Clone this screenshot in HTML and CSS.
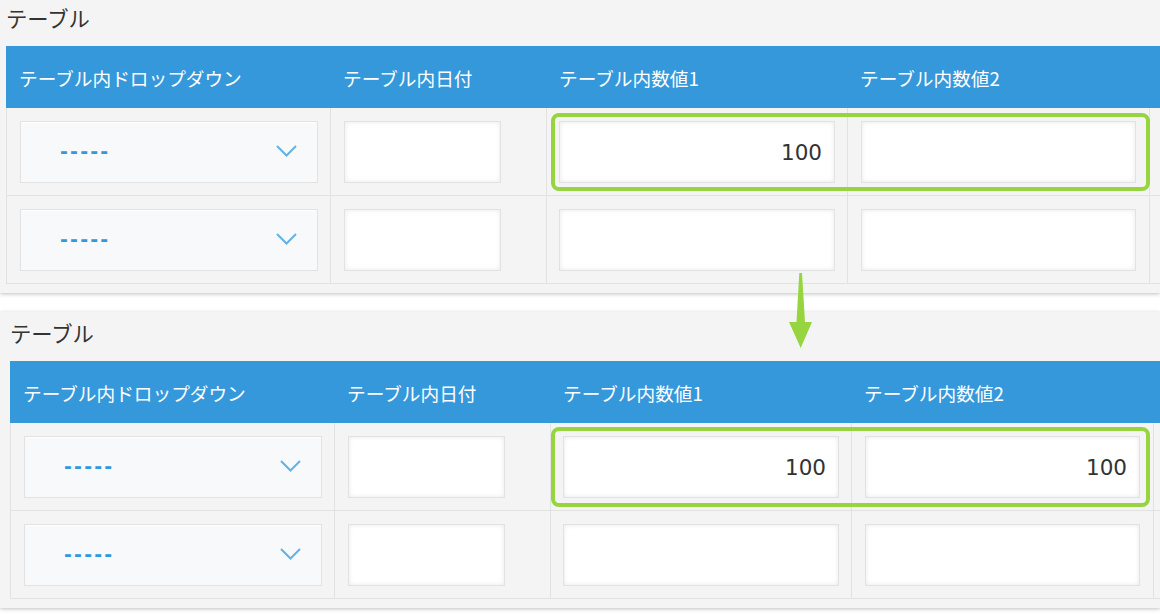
FILE: index.html
```html
<!DOCTYPE html>
<html lang="ja">
<head>
<meta charset="utf-8">
<title>テーブル</title>
<link rel="stylesheet" href="styles.css">
</head>
<body>
<div class="page">

  <section class="panel panel-first">
    <h2 class="panel-title">テーブル</h2>
    <table class="subtable">
      <thead>
        <tr>
          <th class="c1">テーブル内ドロップダウン</th>
          <th class="c2">テーブル内日付</th>
          <th class="c3">テーブル内数値1</th>
          <th class="c4">テーブル内数値2</th>
          <th class="c5"></th>
        </tr>
      </thead>
      <tbody>
        <tr>
          <td class="c1"><div class="dropdown"><span class="dd-value">-----</span><svg class="chev" width="21" height="12" viewBox="0 0 21 12"><polyline points="1,1 10.5,10.5 20,1" fill="none" stroke="#62b1e7" stroke-width="2"/></svg></div></td>
          <td class="c2"><div class="field date"></div></td>
          <td class="c3"><div class="field num wide3">100</div></td>
          <td class="c4"><div class="field num wide4"></div></td>
          <td class="c5"></td>
        </tr>
        <tr>
          <td class="c1"><div class="dropdown"><span class="dd-value">-----</span><svg class="chev" width="21" height="12" viewBox="0 0 21 12"><polyline points="1,1 10.5,10.5 20,1" fill="none" stroke="#62b1e7" stroke-width="2"/></svg></div></td>
          <td class="c2"><div class="field date"></div></td>
          <td class="c3"><div class="field num wide3"></div></td>
          <td class="c4"><div class="field num wide4"></div></td>
          <td class="c5"></td>
        </tr>
      </tbody>
    </table>
    <div class="highlight hl-first"></div>
  </section>

  <section class="panel panel-second">
    <h2 class="panel-title">テーブル</h2>
    <table class="subtable">
      <thead>
        <tr>
          <th class="c1">テーブル内ドロップダウン</th>
          <th class="c2">テーブル内日付</th>
          <th class="c3">テーブル内数値1</th>
          <th class="c4">テーブル内数値2</th>
          <th class="c5"></th>
        </tr>
      </thead>
      <tbody>
        <tr>
          <td class="c1"><div class="dropdown"><span class="dd-value">-----</span><svg class="chev" width="21" height="12" viewBox="0 0 21 12"><polyline points="1,1 10.5,10.5 20,1" fill="none" stroke="#62b1e7" stroke-width="2"/></svg></div></td>
          <td class="c2"><div class="field date"></div></td>
          <td class="c3"><div class="field num wide3">100</div></td>
          <td class="c4"><div class="field num wide4">100</div></td>
          <td class="c5"></td>
        </tr>
        <tr>
          <td class="c1"><div class="dropdown"><span class="dd-value">-----</span><svg class="chev" width="21" height="12" viewBox="0 0 21 12"><polyline points="1,1 10.5,10.5 20,1" fill="none" stroke="#62b1e7" stroke-width="2"/></svg></div></td>
          <td class="c2"><div class="field date"></div></td>
          <td class="c3"><div class="field num wide3"></div></td>
          <td class="c4"><div class="field num wide4"></div></td>
          <td class="c5"></td>
        </tr>
      </tbody>
    </table>
    <div class="highlight hl-second"></div>
  </section>

  <svg class="arrow" width="30" height="80" viewBox="0 0 30 80">
    <polygon points="13.3,3 16,3 19,52 26,52 14.7,78 3,52 10.5,52" fill="#96d540"/>
  </svg>
</div>
</body>
</html>
```

FILE: styles.css
```css
html, body {
  margin: 0;
  padding: 0;
  background: #ffffff;
  overflow: hidden;
}

.page {
  position: relative;
  width: 1160px;
  height: 614px;
  overflow: hidden;
  font-family: "Noto Sans CJK JP", "Noto Sans", sans-serif;
}

.panel {
  position: relative;
  background: #f4f4f4;
  padding-bottom: 9px;
  box-shadow: 0 1px 4px rgba(0, 0, 0, 0.25);
  overflow: hidden;
}

.panel-first {
  padding-top: 2px;
  padding-left: 6px;
}

.panel-second {
  margin-top: 19px;
  padding-top: 5px;
  padding-left: 10px;
}

.panel-title {
  margin: 0 0 12px 0;
  height: 32px;
  line-height: 32px;
  font-size: 21.3px;
  font-weight: normal;
  color: #333333;
}

.subtable {
  border-collapse: separate;
  border-spacing: 0;
  table-layout: fixed;
  width: 1200px;
}

.subtable th,
.subtable td {
  box-sizing: border-box;
}

.subtable th {
  height: 62px;
  padding: 0 13px;
  background: #3598db;
  color: #ffffff;
  font-size: 18.67px;
  font-weight: normal;
  text-align: left;
  white-space: nowrap;
  vertical-align: middle;
}

.subtable td {
  border-left: 1px solid #e2e2e2;
  border-bottom: 1px solid #e2e2e2;
  padding: 13px 12px 12px 13px;
  vertical-align: top;
}

.subtable .c1 { width: 324px; }
.subtable .c2 { width: 216px; }
.subtable .c3 { width: 301px; }
.subtable .c4 { width: 302px; }
.subtable .c5 { width: 57px; }

.subtable td.c3 { padding-left: 12px; }

.dropdown {
  box-sizing: border-box;
  width: 298px;
  height: 62px;
  border: 1px solid #e2e2e2;
  background: #f7f9fa;
  box-shadow: inset 0 1px 1px rgba(255, 255, 255, 0.9);
  display: flex;
  align-items: center;
  justify-content: space-between;
  padding: 0 20px 0 39px;
}

.dd-value {
  font-family: "DejaVu Sans", sans-serif;
  font-size: 19px;
  letter-spacing: 2.2px;
  color: #3498db;
  font-weight: bold;
  line-height: 1;
  position: relative;
  top: -1px;
}

.chev {
  display: block;
  margin-top: -3px;
}

.field {
  box-sizing: border-box;
  height: 62px;
  border: 1px solid #e2e2e2;
  background: #ffffff;
  box-shadow: inset 0 0 5px rgba(0, 0, 0, 0.09);
}

.field.date { width: 157px; }
.field.wide3 { width: 276px; }
.field.wide4 { width: 275px; }

.field.num {
  display: flex;
  align-items: center;
  justify-content: flex-end;
  padding-right: 12px;
  font-family: "DejaVu Sans", sans-serif;
  font-size: 21.5px;
  color: #333333;
}

.highlight {
  position: absolute;
  box-sizing: border-box;
  left: 551px;
  width: 599px;
  border: 4px solid #96d540;
  border-radius: 8px;
  pointer-events: none;
}

.hl-first {
  top: 113px;
  height: 78px;
}

.hl-second {
  top: 115px;
  height: 80px;
}

.arrow {
  position: absolute;
  left: 786px;
  top: 270px;
}
```
